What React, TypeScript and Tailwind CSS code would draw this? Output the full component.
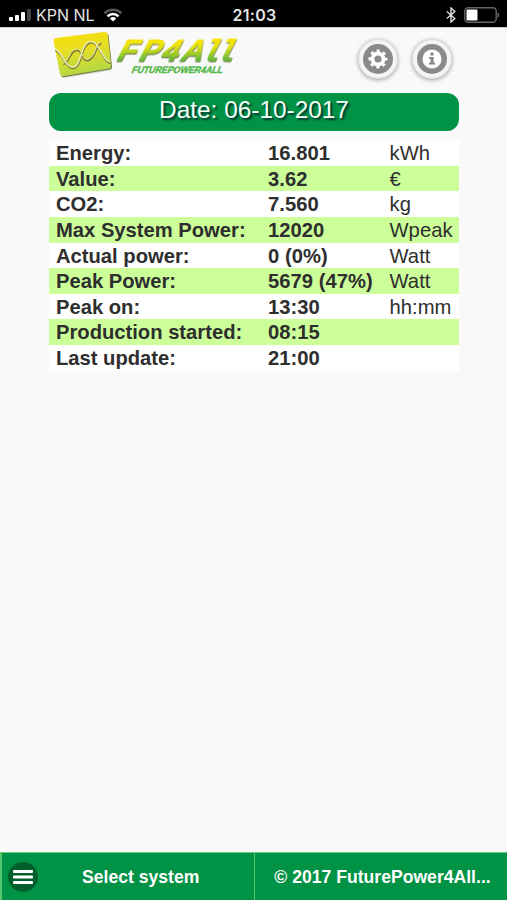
type Row = { label: string; value: string; unit?: string };

const rows: Row[] = [
  { label: 'Energy:', value: '16.801', unit: 'kWh' },
  { label: 'Value:', value: '3.62', unit: '€' },
  { label: 'CO2:', value: '7.560', unit: 'kg' },
  { label: 'Max System Power:', value: '12020', unit: 'Wpeak' },
  { label: 'Actual power:', value: '0 (0%)', unit: 'Watt' },
  { label: 'Peak Power:', value: '5679 (47%)', unit: 'Watt' },
  { label: 'Peak on:', value: '13:30', unit: 'hh:mm' },
  { label: 'Production started:', value: '08:15' },
  { label: 'Last update:', value: '21:00' },
];

function StatusBar() {
  return (
    <div className="grid h-[27px] shrink-0 grid-cols-3 items-center bg-black pt-[3px] pl-[9px] pr-[7px] font-['Inter',sans-serif] text-[#e4e4e4]">
      <div className="flex items-center">
        <svg viewBox="0 0 24 14" className="h-[14px] w-[24px]" fill="#fff">
          <rect x="0" y="9" width="4" height="4" rx="1" />
          <rect x="6" y="7" width="4" height="6" rx="1" />
          <rect x="12" y="4" width="4" height="9" rx="1" />
          <rect x="18" y="1" width="4" height="12" rx="1" fill="#444" />
        </svg>
        <span className="ml-[3px] text-[16px] leading-none whitespace-nowrap">KPN NL</span>
        <svg viewBox="0 0 20 14" className="ml-2 h-[14px] w-[20px]" fill="none" strokeWidth="2.6">
          <path d="M1.5 5.2a12.2 12.2 0 0 1 17 0" stroke="#555" />
          <path d="M4.5 8.3a7.8 7.8 0 0 1 11 0" stroke="#fff" />
          <path d="M10 13.5L6.8 10.4a4.6 4.6 0 0 1 6.4 0z" fill="#fff" stroke="none" />
        </svg>
      </div>
      <span className="text-center text-[16px] leading-none font-semibold tracking-[0.3px]">21:03</span>
      <div className="flex items-center justify-end">
        <svg viewBox="0 0 10 16" className="mr-2 h-4 w-[10px]" fill="none" stroke="#ddd" strokeWidth="1.4">
          <path d="M.8 4.5l8 7L5 15V1l3.8 3.5-8 7" />
        </svg>
        <svg viewBox="0 0 36 16" className="h-4 w-9">
          <rect x=".8" y=".8" width="31.4" height="14.4" rx="3.5" fill="none" stroke="#666" strokeWidth="1.4" />
          <rect x="2.5" y="2.5" width="11" height="11" rx="1.2" fill="#fff" />
          <path d="M33.5 5.3c2.4.8 2.4 4.6 0 5.4z" fill="#666" />
        </svg>
      </div>
    </div>
  );
}

function Logo() {
  return (
    <svg viewBox="0 0 195 54" className="h-[54px] w-[195px]" role="img" aria-label="FP4All">
      <defs>
        <linearGradient id="tile" x1="0" y1="0" x2=".25" y2="1">
          <stop offset="0" stopColor="#f8dc00" />
          <stop offset=".4" stopColor="#ecdf20" />
          <stop offset="1" stopColor="#b5d843" />
        </linearGradient>
        <linearGradient id="word" gradientUnits="userSpaceOnUse" x1="0" y1="-22" x2="0" y2="0">
          <stop offset="0" stopColor="#fbe600" />
          <stop offset=".35" stopColor="#e6e312" />
          <stop offset="1" stopColor="#5fb83c" />
        </linearGradient>
        <filter id="drop" x="-10%" y="-20%" width="125%" height="150%">
          <feDropShadow dx="1" dy="1.3" stdDeviation=".6" floodColor="#5e6626" floodOpacity=".85" />
        </filter>
      </defs>
      <path
        d="M7 10L55 4Q58 3.7 58.5 6L62 37Q62.2 40 59.5 40.5L14.5 48Q11.5 48.5 11 46L4.7 14Q4.2 10.5 7 10Z"
        fill="url(#tile)"
        filter="url(#drop)"
      />
      <g fill="none">
        <g stroke="#827c35" strokeWidth="1.8" transform="translate(.4 1.3)">
          <path d="M6 21C14 24 15 38 23 39C33 40 31 15 41 13.5C50 12 52 31 61 34" />
          <path d="M14 35C20 34 20 22 27 21C34 20 32 33 39 31C47 29 46 15 52 14" />
        </g>
        <path d="M6 21C14 24 15 38 23 39C33 40 31 15 41 13.5C50 12 52 31 61 34" stroke="#eef0b5" strokeWidth="1.5" />
        <path d="M14 35C20 34 20 22 27 21C34 20 32 33 39 31C47 29 46 15 52 14" stroke="#e8e8a0" strokeWidth="1" />
      </g>
      <g transform="translate(66 32.5) skewX(-27)" filter="url(#drop)">
        <text
          x="0 22 44 64"
          fill="url(#word)"
          stroke="url(#word)"
          strokeWidth=".7"
          className="font-['Liberation_Sans',sans-serif] text-[30px] font-bold"
        >
          FP4A
          <tspan x="84 99" className="font-['Liberation_Mono',monospace] text-[29px]">
            ll
          </tspan>
        </text>
      </g>
      <g transform="translate(82 44.5) skewX(-20)">
        <text
          textLength="91"
          lengthAdjust="spacingAndGlyphs"
          fill="#52b848"
          stroke="#52b848"
          strokeWidth=".4"
          className="font-['Liberation_Sans',sans-serif] text-[9.5px] font-bold"
        >
          FUTUREPOWER4ALL
        </text>
      </g>
    </svg>
  );
}

function GearIcon() {
  return (
    <svg viewBox="0 0 20 20" className="size-5" fill="none" stroke="#fff">
      <circle cx="10" cy="10" r="5.5" strokeWidth="3.8" />
      <circle cx="10" cy="10" r="8.2" strokeWidth="2.6" strokeDasharray="3.1 3.34" strokeDashoffset="1.55" />
    </svg>
  );
}

function InfoIcon() {
  return (
    <svg viewBox="0 0 20 20" className="size-5">
      <circle cx="10" cy="10" r="9.5" fill="#fff" />
      <path d="M8.5 3.6h3v2.8h-3zM7 7.9h4.6v5.7H13v1.8H7v-1.8h1.6V9.7H7z" fill="#858585" />
    </svg>
  );
}

function RoundButton({ label, children }: { label: string; children: React.ReactNode }) {
  return (
    <button
      aria-label={label}
      className="flex size-10 items-center justify-center rounded-full border border-[#ddd] bg-[#f4f4f4] shadow-[0_1px_4px_rgba(0,0,0,0.35)]"
    >
      <span className="flex size-[30px] items-center justify-center rounded-full bg-[#8a8a8a]">{children}</span>
    </button>
  );
}

export default function App() {
  return (
    <div className="flex h-[900px] w-[507px] flex-col overflow-hidden bg-[#f9f9f9] font-['Liberation_Sans',sans-serif] text-[#2e2e2e]">
      <StatusBar />
      <main className="flex-1 border-t border-[#ccc] pr-12 pl-[49px]">
        <header className="flex h-[65px] items-start justify-between">
          <Logo />
          <div className="mt-[11px] mr-[7px] flex gap-[14px]">
            <RoundButton label="Settings">
              <GearIcon />
            </RoundButton>
            <RoundButton label="Info">
              <InfoIcon />
            </RoundButton>
          </div>
        </header>

        <h1 className="h-[38px] rounded-[12px] bg-[#009245] text-center text-[24.4px] leading-[34px] text-[#f5fff5] [text-shadow:2px_2px_2px_#033]">
          Date: 06-10-2017
        </h1>

        <div className="mt-[9px] text-[20.2px] leading-[26px]">
          {rows.map((row) => (
            <div
              key={row.label}
              className="grid h-[25.65px] grid-cols-[212px_121.5px_1fr] bg-white pl-[7px] whitespace-nowrap even:bg-[#ccff99]"
            >
              <span className="font-bold">{row.label}</span>
              <span className="font-bold tracking-[0.05px]">{row.value}</span>
              <span className="tracking-[0.05px]">{row.unit}</span>
            </div>
          ))}
        </div>
      </main>

      <footer className="grid h-12 shrink-0 grid-cols-[255px_1fr] border-t border-[#69cf78] bg-[#009245] text-[17.6px] font-bold text-white [text-shadow:0_1px_1px_#059]">
        <button className="flex items-center border-r border-l-2 border-[#56c46a] pl-1.5">
          <span className="flex size-[30px] items-center justify-center rounded-full bg-[#005f2b]">
            <svg viewBox="0 0 20 16" className="h-4 w-5" fill="#fff">
              <rect y="1" width="20" height="3" rx="1" />
              <rect y="6.5" width="20" height="3" rx="1" />
              <rect y="12" width="20" height="3" rx="1" />
            </svg>
          </span>
          <span className="ml-11 pt-0.5">Select system</span>
        </button>
        <button className="truncate pt-0.5 pr-2 pl-[11px]">© 2017 FuturePower4All...</button>
      </footer>
    </div>
  );
}
